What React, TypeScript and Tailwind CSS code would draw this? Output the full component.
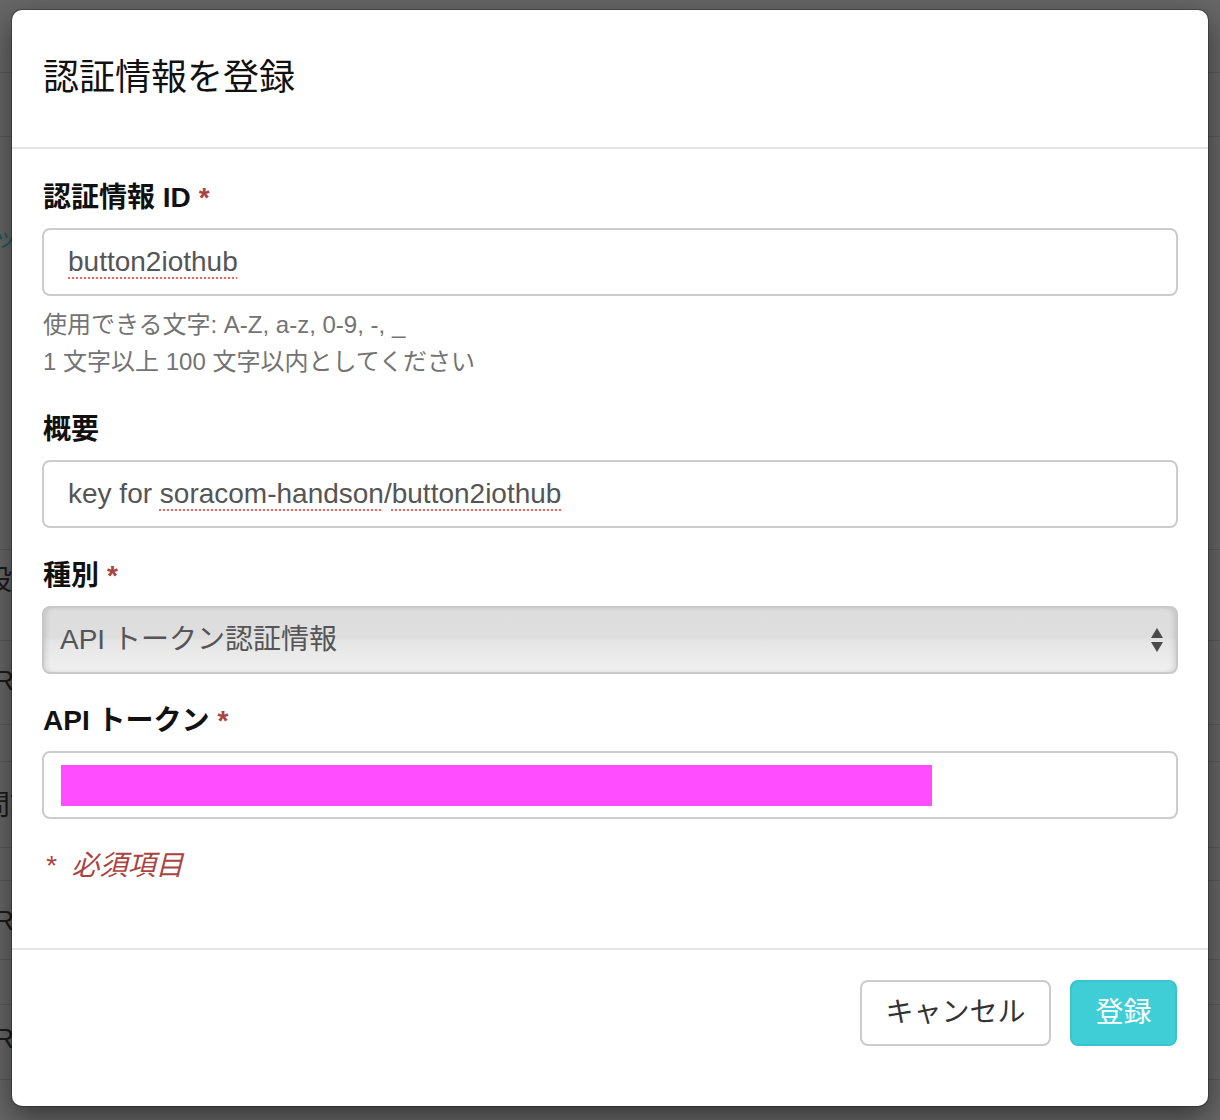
import React from "react"

const required = <span className="ml-[8px] text-[#a94442]">*</span>

function Label({ children, req }: { children: React.ReactNode; req?: boolean }) {
    return (
        <label className="block pl-[1px] text-[28px] leading-[40px] font-bold text-[#111] mb-[10px]">
            {children}
            {req && required}
        </label>
    )
}

function Spell({ children }: { children: React.ReactNode }) {
    return (
        <span className="underline decoration-dotted decoration-[#ff5c5c] decoration-2 underline-offset-[6px]">{children}</span>
    )
}

// dimmed page rows behind the modal backdrop
const rows: { h: string; pt?: string; text?: React.ReactNode }[] = [
    { h: "h-[73px]" },
    { h: "h-[64px]" },
    { h: "h-[413px]", pt: "pt-[80px]", text: <span className="-ml-[6px] text-[24px] text-[#1c5b63]">ッ−</span> },
    { h: "h-[91px]", pt: "pt-[11px]", text: <span className="-ml-[16px]">設定</span> },
    { h: "h-[84px]", pt: "pt-[20px]", text: <span className="-ml-[6px]">R</span> },
    { h: "h-[37px]" },
    { h: "h-[86px]", pt: "pt-[24px]", text: <span className="-ml-[18px]">問認</span> },
    { h: "h-[33px]" },
    { h: "h-[79px]", pt: "pt-[20px]", text: <span className="-ml-[6px]">R</span> },
    { h: "h-[45px]" },
    { h: "h-[75px]", pt: "pt-[14px]", text: <span className="-ml-[6px]">R</span> },
]

export default function App() {
    return (
        <div className="relative w-[1220px] h-[1120px] overflow-hidden bg-[#676767] font-['Liberation_Sans','Noto_Sans_CJK_JP',sans-serif]">
            <div className="flex flex-col">
                {rows.map((r, i) => (
                    <div key={i} className={`${r.h} ${r.pt ?? ""} border-b border-[#5a5a5a] text-[28px] leading-[40px] text-[#1c1c1c] whitespace-nowrap`}>
                        {r.text}
                    </div>
                ))}
            </div>

            <div className="absolute left-[12px] top-[10px] w-[1196px] h-[1096px] bg-white rounded-[10px] shadow-[0_0_0_1px_rgba(0,0,0,0.25),0_10px_30px_rgba(0,0,0,0.5)] flex flex-col text-[#333]">
                <div className="h-[139px] pb-[2px] px-[31px] flex items-center border-b-2 border-[#e5e5e5]">
                    <h4 className="text-[36px] leading-[51px] font-normal text-[#111]">認証情報を登録</h4>
                </div>

                <div className="px-[30px] pt-[29px] flex flex-col">
                    <div className="mb-[30px]">
                        <Label req>認証情報 ID</Label>
                        <div className="h-[68px] border-2 border-[#ccc] rounded-[8px] px-[24px] flex items-center text-[28px] text-[#555]">
                            <Spell>button2iothub</Spell>
                        </div>
                        <div className="mt-[10px] pl-[1px] text-[24px] leading-[37px] text-[#737373]">
                            <p>使用できる文字: A-Z, a-z, 0-9, -, _</p>
                            <p>1 文字以上 100 文字以内としてください</p>
                        </div>
                    </div>

                    <div className="mb-[28px]">
                        <Label>概要</Label>
                        <div className="h-[68px] border-2 border-[#ccc] rounded-[8px] px-[24px] flex items-center text-[28px] text-[#555] whitespace-nowrap">
                            key for&nbsp;<Spell>soracom-handson</Spell>/<Spell>button2iothub</Spell>
                        </div>
                    </div>

                    <div className="mb-[27px]">
                        <Label req>種別</Label>
                        <div className="h-[68px] border-2 border-[#c8c8c8] rounded-[8px] pl-[16px] pr-[12px] flex items-center justify-between text-[28px] text-[#555] bg-[linear-gradient(to_bottom,#dddddd_0%,#dedede_45%,#e5e5e5_52%,#f1f1f1_100%)] shadow-[inset_4px_0_6px_-3px_rgba(0,0,0,0.15),inset_-4px_0_6px_-3px_rgba(0,0,0,0.15)]">
                            <span>API トークン認証情報</span>
                            <svg width="14" height="26" viewBox="0 0 14 26">
                                <path d="M7 1 L13 11 L1 11 Z" fill="#4a4a4a" />
                                <path d="M1 15 L13 15 L7 25 Z" fill="#4a4a4a" />
                            </svg>
                        </div>
                    </div>

                    <div className="mb-[27px]">
                        <Label req>API トークン</Label>
                        <div className="h-[68px] border-2 border-[#ccc] rounded-[8px] pl-[17px] flex items-center">
                            <div className="w-[871px] h-[41px] bg-[#ff4dff]" />
                        </div>
                    </div>

                    <p className="text-[28px] leading-[40px] italic text-[#a94442] pl-[3px]">
                        *&nbsp;&nbsp;必須項目
                    </p>
                </div>

                <div className="mt-[62px] border-t-2 border-[#e5e5e5] pt-[30px] pl-[30px] pr-[31px] flex justify-end gap-[19px]">
                    <button className="w-[191px] h-[66px] border-2 border-[#ccc] rounded-[8px] bg-white text-[28px] text-[#333]">キャンセル</button>
                    <button className="w-[107px] h-[66px] border-2 border-[#3bc3cc] rounded-[8px] bg-[#40ced6] text-[28px] text-white">登録</button>
                </div>
            </div>
        </div>
    )
}
